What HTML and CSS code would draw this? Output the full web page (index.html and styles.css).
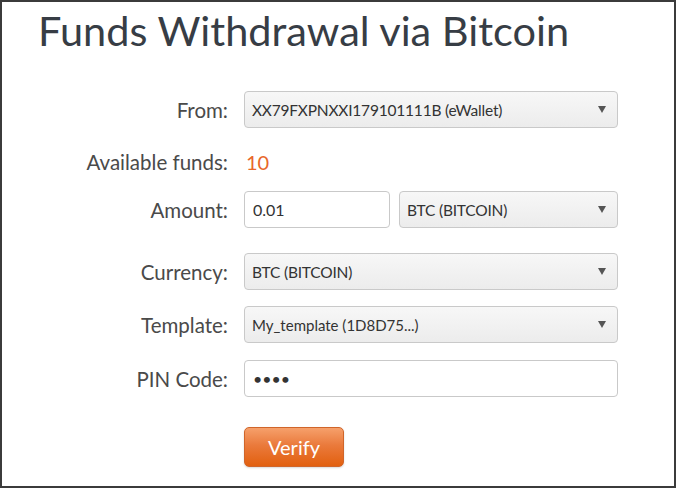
FILE: index.html
```html
<!DOCTYPE html>
<html lang="en">
<head>
  <meta charset="UTF-8">
  <title>Funds Withdrawal via Bitcoin</title>
  <link rel="stylesheet" href="styles.css">
</head>
<body>
  <div class="frame">
    <h1>Funds Withdrawal via Bitcoin</h1>

    <form class="form" onsubmit="return false">
      <label class="lbl row-from">From:</label>
      <div class="select row-from">
        <span class="sel-text small">XX79FXPNXXI179101111B (eWallet)</span>
        <span class="arrow"></span>
      </div>

      <label class="lbl row-funds">Available funds:</label>
      <div class="funds row-funds">10</div>

      <label class="lbl row-amount">Amount:</label>
      <div class="pair row-amount">
        <input type="text" class="field amount" value="0.01">
        <div class="select">
          <span class="sel-text small">BTC (BITCOIN)</span>
          <span class="arrow"></span>
        </div>
      </div>

      <label class="lbl row-currency">Currency:</label>
      <div class="select row-currency">
        <span class="sel-text small">BTC (BITCOIN)</span>
        <span class="arrow"></span>
      </div>

      <label class="lbl row-template">Template:</label>
      <div class="select row-template">
        <span class="sel-text">My_template (1D8D75...)</span>
        <span class="arrow"></span>
      </div>

      <label class="lbl row-pin">PIN Code:</label>
      <input type="password" class="field row-pin" value="1234">

      <span class="row-btn"></span>
      <button class="verify row-btn">Verify</button>
    </form>
  </div>
</body>
</html>
```

FILE: styles.css
```css
html, body { margin: 0; padding: 0; background: #fff; }
body { font-family: Lato, "Open Sans", sans-serif; color: #444; }

.frame {
  width: 676px; height: 488px;
  box-sizing: border-box;
  border: 2px solid #3b3b3b;
  padding: 4px 0 0 36px;
  overflow: hidden;
}

h1 {
  margin: 0 0 37px 0;
  font-weight: normal;
  font-size: 41.5px;
  line-height: 48px;
  color: #373d45;
}

.form {
  display: grid;
  grid-template-columns: 190px 374px;
  column-gap: 16px;
  align-items: center;
}

.lbl { text-align: right; font-size: 20.5px; color: #4a4a4a; white-space: nowrap; }

.select {
  height: 37px;
  box-sizing: border-box;
  border: 1px solid #c9c9c9;
  border-radius: 4px;
  background: linear-gradient(#f7f7f7, #ececec);
  display: flex;
  align-items: center;
  padding: 0 11px 0 7px;
}
.sel-text { flex: 1; font-size: 15px; color: #333; white-space: nowrap; }
.sel-text.small { font-size: 15.5px; letter-spacing: -0.2px; }
.arrow {
  width: 0; height: 0;
  border-left: 4px solid transparent;
  border-right: 4px solid transparent;
  border-top: 7px solid #555;
}

.field {
  height: 37px;
  box-sizing: border-box;
  border: 1px solid #c9c9c9;
  border-radius: 4px;
  background: #fff;
  padding: 0 8px;
  font-family: inherit;
  font-size: 16px;
  color: #333;
  width: 100%;
  margin: 0;
}

.pair { display: flex; gap: 9px; }
.pair .amount { width: 146px; flex: none; }
.pair .select { flex: 1; }

.funds { font-size: 20px; color: #e8672a; padding-left: 2px; }

.row-funds { margin-top: 22px; margin-bottom: 16px; height: 25px; line-height: 25px; }
.row-currency { margin-top: 25px; }
.row-template { margin-top: 16px; }
.row-pin { margin-top: 17px; }
.row-btn { margin-top: 30px; }

.verify {
  justify-self: start;
  width: 100px; height: 40px;
  border: 1px solid #d0652a;
  border-radius: 5px;
  background: linear-gradient(#f6a06b, #ea7a3c 45%, #e2600f);
  color: #fff;
  font-family: inherit;
  font-size: 20px;
  cursor: pointer;
  box-shadow: 0 1px 2px rgba(0,0,0,0.15);
}
```
